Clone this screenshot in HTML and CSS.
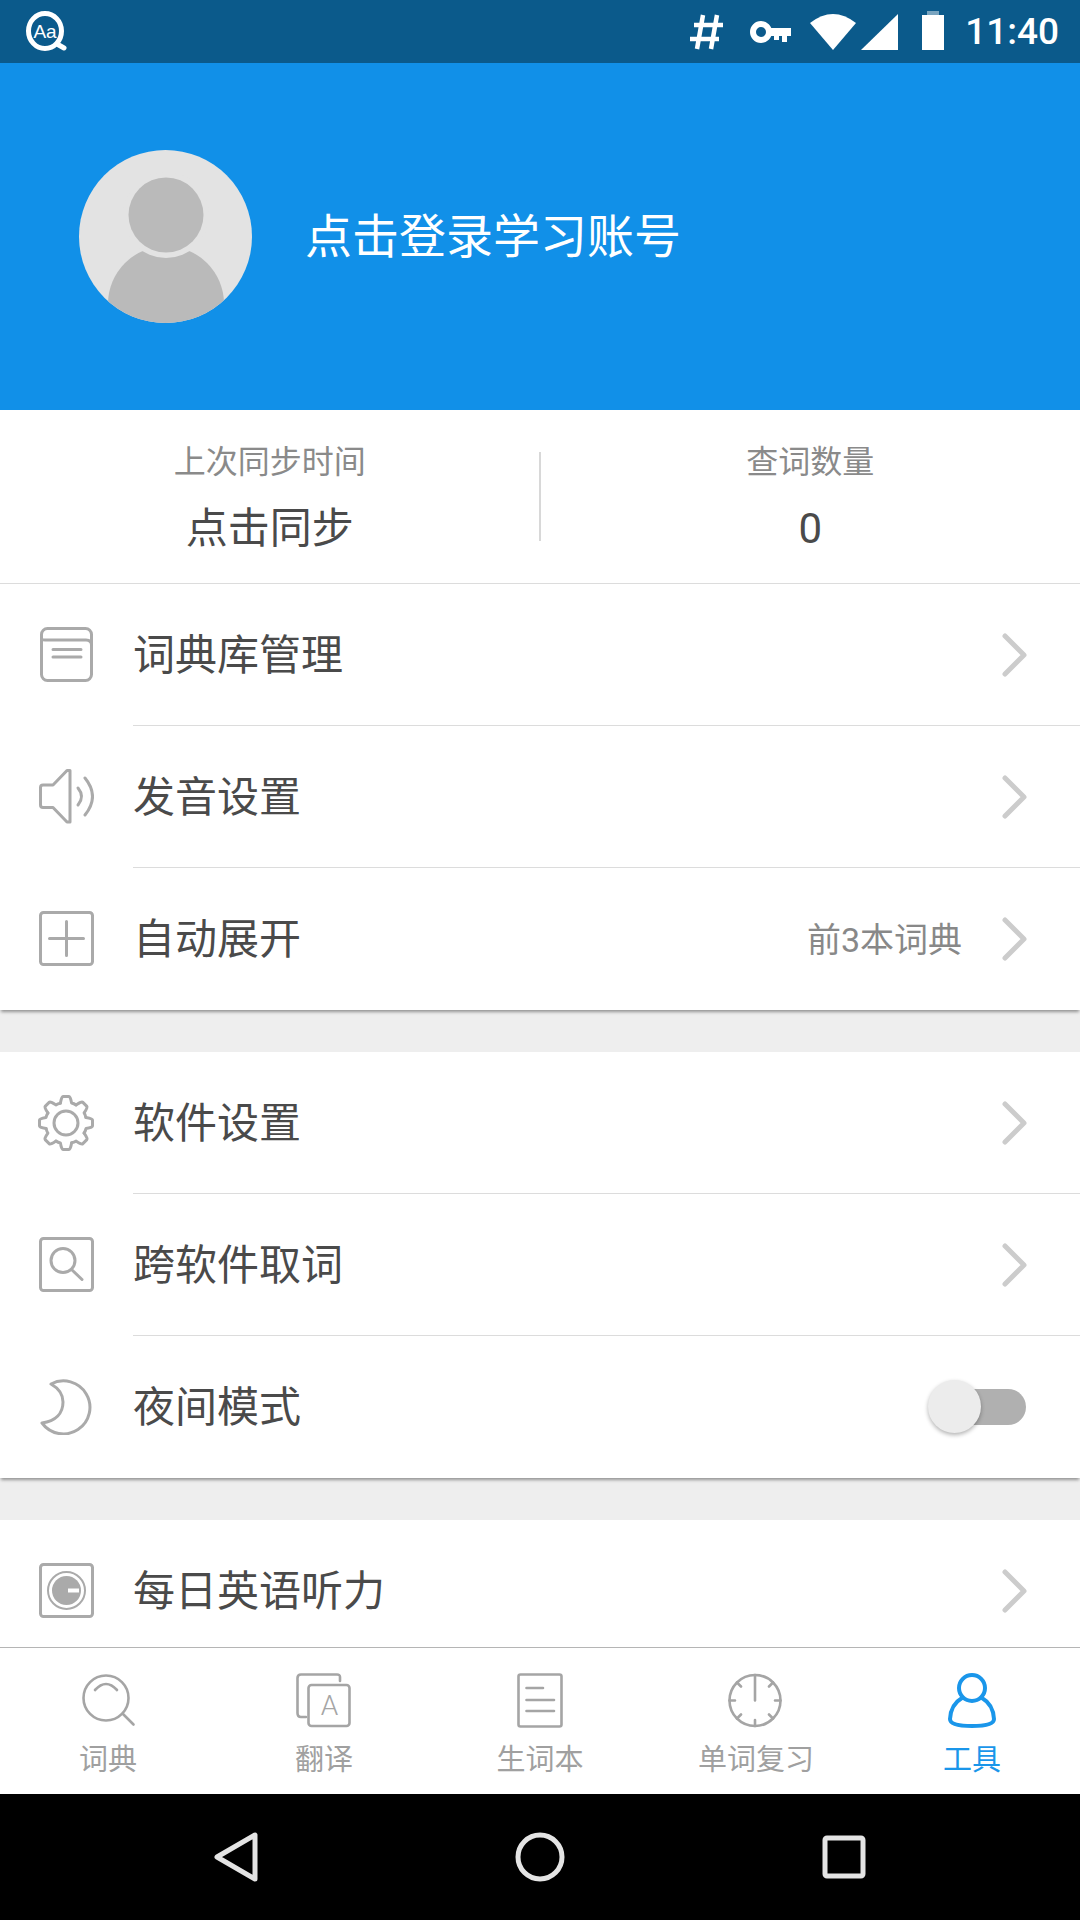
FILE: index.html
```html
<!DOCTYPE html>
<html lang="zh-CN">
<head>
<meta charset="utf-8">
<title>工具</title>
<link rel="stylesheet" href="styles.css">
</head>
<body>
<div class="phone">
  <header class="status">
    <svg class="s-logo" width="46" height="42" viewBox="0 0 46 42">
      <ellipse cx="21" cy="20" rx="16.5" ry="17.5" fill="none" stroke="#fff" stroke-width="5"/>
      <path d="M33 33 L40 37" stroke="#fff" stroke-width="5" stroke-linecap="round"/>
      <text x="21" y="27" class="s-logo-text" text-anchor="middle">Aa</text>
    </svg>
    <div class="status-right">
      <svg width="33" height="36" viewBox="0 0 33 36"><path d="M13 1 L7 35 M27 1 L21 35 M4 11 H33 M0 25 H29" stroke="#fff" stroke-width="4.5" fill="none"/></svg>
      <svg class="s-key" width="41" height="24" viewBox="0 0 41 24"><circle cx="11" cy="12" r="8" fill="none" stroke="#fff" stroke-width="6"/><path d="M18 8 H41 V16 H37 V22 H32 V16 H29 V20 H24 V16 H18 Z" fill="#fff"/></svg>
      <svg class="s-wifi" width="46" height="36" viewBox="0 0 46 36"><path d="M0 9 Q23 -9 46 9 L23 36 Z" fill="#fff"/></svg>
      <svg class="s-signal" width="37" height="36" viewBox="0 0 37 36"><path d="M37 0 V36 H0 Z" fill="#fff"/></svg>
      <svg class="s-batt" width="22" height="39" viewBox="0 0 22 39"><rect x="5" y="0" width="12" height="5" fill="#fff" opacity=".45"/><rect x="0" y="4" width="22" height="35" fill="#fff"/></svg>
      <span class="time">11:40</span>
    </div>
  </header>

  <section class="profile">
    <svg class="avatar" width="173" height="173" viewBox="0 0 173 173">
      <defs><clipPath id="av"><circle cx="86.5" cy="86.5" r="86.5"/></clipPath></defs>
      <g clip-path="url(#av)">
        <rect width="173" height="173" fill="#e3e3e3"/>
        <circle cx="87" cy="154" r="58" fill="#bababa"/>
        <circle cx="87" cy="65" r="43" fill="#e3e3e3"/>
        <circle cx="87" cy="65" r="37.5" fill="#bababa"/>
      </g>
    </svg>
    <div class="login">点击登录学习账号</div>
  </section>

  <main class="scroll">
    <section class="stats">
      <div class="stat"><div class="stat-label">上次同步时间</div><div class="stat-value">点击同步</div></div>
      <div class="stat-sep"></div>
      <div class="stat"><div class="stat-label">查词数量</div><div class="stat-value">0</div></div>
    </section>

    <section class="group">
      <div class="row">
        <svg class="ico" width="56" height="56" viewBox="0 0 56 56"><rect x="3.5" y="1.5" width="50" height="52" rx="6"/><path d="M3.5 12 Q3.5 13 7 13 H48 Q53.5 13 53.5 18"/><path d="M15 22.5 H43 M15 30 H43"/></svg>
        <div class="label">词典库管理</div>
        <svg class="chev" width="26" height="44" viewBox="0 0 26 44"><path d="M3 3 L22 22 L3 41"/></svg>
      </div>
      <div class="row">
        <svg class="ico" width="56" height="56" viewBox="0 0 56 56"><path d="M32 1.5 H29 L15 16 H5 Q2.5 16 2.5 18.5 V36 Q2.5 38.5 5 38.5 H15 L29 53 H32 Z"/><path d="M40 19 Q47 27.5 40 36"/><path d="M47 9 Q62 27.5 47 46"/></svg>
        <div class="label">发音设置</div>
        <svg class="chev" width="26" height="44" viewBox="0 0 26 44"><path d="M3 3 L22 22 L3 41"/></svg>
      </div>
      <div class="row">
        <svg class="ico" width="56" height="56" viewBox="0 0 56 56"><rect x="2.5" y="1.5" width="52" height="52" rx="3"/><path d="M11.5 27.5 H45.5 M28.5 10.5 V44.5"/></svg>
        <div class="label">自动展开</div>
        <div class="value">前3本词典</div>
        <svg class="chev" width="26" height="44" viewBox="0 0 26 44"><path d="M3 3 L22 22 L3 41"/></svg>
      </div>
    </section>

    <section class="group">
      <div class="row">
        <svg class="ico" width="56" height="56" viewBox="-28 -28 56 56">
          <defs><path id="tooth" d="M-5.6 -20 Q-4.5 -26.5 -3 -26.5 H3 Q4.5 -26.5 5.6 -20 Q8 -19.5 10 -18"/></defs>
          <use href="#tooth"/><use href="#tooth" transform="rotate(45)"/><use href="#tooth" transform="rotate(90)"/><use href="#tooth" transform="rotate(135)"/><use href="#tooth" transform="rotate(180)"/><use href="#tooth" transform="rotate(225)"/><use href="#tooth" transform="rotate(270)"/><use href="#tooth" transform="rotate(315)"/>
          <circle r="12"/>
        </svg>
        <div class="label">软件设置</div>
        <svg class="chev" width="26" height="44" viewBox="0 0 26 44"><path d="M3 3 L22 22 L3 41"/></svg>
      </div>
      <div class="row">
        <svg class="ico" width="56" height="56" viewBox="0 0 56 56"><rect x="2.5" y="1.5" width="52" height="52" rx="3"/><circle cx="25" cy="23.5" r="12"/><path d="M33.5 32.5 L44 42.5"/></svg>
        <div class="label">跨软件取词</div>
        <svg class="chev" width="26" height="44" viewBox="0 0 26 44"><path d="M3 3 L22 22 L3 41"/></svg>
      </div>
      <div class="row">
        <svg class="ico" width="56" height="56" viewBox="0 0 56 56"><path d="M13 5 A26.5 26.5 0 1 1 4 44 C18 42 25 34 25 23 C25 15 20 9 13 5 Z"/></svg>
        <div class="label">夜间模式</div>
        <div class="switch"><div class="knob"></div></div>
      </div>
    </section>

    <section class="group">
      <div class="row">
        <svg class="ico" width="56" height="56" viewBox="0 0 56 56"><rect x="2.5" y="1.5" width="52" height="52" rx="3"/><circle cx="28.5" cy="27.5" r="18.5" stroke-width="2"/><circle cx="28.5" cy="27.5" r="14.5" class="solid"/><path d="M30 27.5 H41" class="gap"/></svg>
        <div class="label">每日英语听力</div>
        <svg class="chev" width="26" height="44" viewBox="0 0 26 44"><path d="M3 3 L22 22 L3 41"/></svg>
      </div>
    </section>
  </main>

  <nav class="tabs">
    <div class="tab">
      <svg class="tico" width="56" height="56" viewBox="0 0 56 56"><circle cx="26" cy="25" r="22.5"/><path d="M15 17 Q26 5 37 17"/><path d="M43 41 L53.5 51.5"/></svg>
      <span>词典</span>
    </div>
    <div class="tab">
      <svg class="tico" width="56" height="56" viewBox="0 0 56 56"><path d="M44 8 V4 Q44 1.5 41 1.5 H5 Q1.5 1.5 1.5 5 V40 Q1.5 44 5 44 H10"/><rect x="12.5" y="12" width="41" height="41" rx="3"/><text x="33.6" y="42" class="tico-a" text-anchor="middle">A</text></svg>
      <span>翻译</span>
    </div>
    <div class="tab">
      <svg class="tico" width="56" height="56" viewBox="0 0 56 56"><rect x="6.5" y="1.5" width="43" height="52" rx="2"/><path d="M14.5 15 H31 M14.5 27 H42 M14.5 38 H42"/></svg>
      <span>生词本</span>
    </div>
    <div class="tab">
      <svg class="tico" width="56" height="56" viewBox="0 0 56 56"><circle cx="27" cy="27.5" r="25.5"/><path d="M27 2 V27.5 M52.5 27.5 H47 M27 53 V47 M1.5 27.5 H7 M45 9.5 L41 13.5 M45 45.5 L41 41.5 M9 45.5 L13 41.5 M9 9.5 L13 13.5"/></svg>
      <span>单词复习</span>
    </div>
    <div class="tab tab-on">
      <svg class="tico" width="56" height="56" viewBox="0 0 56 56"><circle cx="28" cy="15" r="13"/><path d="M18 25 C11 29 6.5 37 6 46 Q6 53 28 53 Q50 53 50 46 C49.5 37 45 29 38 25"/></svg>
      <span>工具</span>
    </div>
  </nav>

  <footer class="nav">
    <svg width="50" height="52" viewBox="0 0 50 52"><path d="M44 4 V48 L6 26 Z"/></svg>
    <svg width="50" height="52" viewBox="0 0 50 52"><circle cx="25" cy="26" r="22"/></svg>
    <svg width="50" height="52" viewBox="0 0 50 52"><rect x="6" y="7" width="38" height="38" rx="2"/></svg>
  </footer>
</div>
</body>
</html>
```

FILE: styles.css
```css
* { box-sizing: border-box; }
html, body { margin: 0; padding: 0; }
body {
  font-family: Roboto, "Noto Sans CJK SC", sans-serif;
  background: #fff;
}
svg { display: block; flex: none; }

.phone {
  width: 1080px;
  height: 1920px;
  display: flex;
  flex-direction: column;
  overflow: hidden;
}

/* status bar */
.status {
  flex: none;
  height: 63px;
  background: #0b5a8b;
  display: flex;
  align-items: center;
  padding: 0 21px 0 24px;
}
.s-logo-text {
  font-family: "Liberation Sans Narrow", "Liberation Sans", sans-serif;
  font-size: 19px;
  fill: #fff;
}
.status-right {
  margin-left: auto;
  display: flex;
  align-items: center;
}
.s-key { margin-left: 27px; }
.s-wifi { margin-left: 19px; }
.s-signal { margin-left: 5px; }
.s-batt { margin-left: 24px; margin-top: -3px; }
.time {
  margin-left: 21px;
  font-size: 37px;
  font-weight: 500;
  color: #fff;
  line-height: 63px;
}

/* profile */
.profile {
  flex: none;
  height: 347px;
  background: #1190e8;
  display: flex;
  align-items: center;
  gap: 53px;
  padding-left: 79px;
}
.login { font-size: 47px; color: #fff; padding-bottom: 8px; }

/* scrolling content */
.scroll {
  flex: 1;
  min-height: 0;
  overflow: hidden;
  background: #eeeeee;
}
.stats {
  height: 174px;
  background: #fff;
  border-bottom: 1px solid #dcdcdc;
  display: grid;
  grid-template-columns: 1fr 1px 1fr;
}
.stat {
  display: flex;
  flex-direction: column;
  align-items: center;
  padding-top: 29px;
}
.stat-label { font-size: 32px; line-height: 46px; color: #8a8a8a; }
.stat-value { font-size: 42px; line-height: 60px; margin-top: 14px; color: #4a4a4a; }
.stat-sep { align-self: center; height: 89px; background: #d8d8d8; margin-left: -1px; }

.group {
  background: #fff;
  margin-bottom: 42px;
  box-shadow: 0 3px 3px -1px rgba(0, 0, 0, .38);
}
.group:last-child { box-shadow: none; }
.row {
  height: 142px;
  display: flex;
  align-items: center;
  padding: 0 52px 0 38px;
  position: relative;
}
.row + .row::before {
  content: "";
  position: absolute;
  left: 133px;
  right: 0;
  top: -1px;
  height: 1px;
  background: #dcdcdc;
}
.ico { fill: none; stroke: #aaa; stroke-width: 3; stroke-linecap: round; stroke-linejoin: round; }
.ico .solid { fill: #aaa; stroke: none; }
.ico .gap { stroke: #fff; stroke-width: 4; stroke-linecap: butt; }
.label {
  margin-left: 39px;
  padding-bottom: 7px;
  font-size: 42px;
  color: #4a4a4a;
  flex: 1;
}
.value { font-size: 34px; color: #888; margin-right: 40px; padding-bottom: 3px; }
.chev { fill: none; stroke: #ccc; stroke-width: 5; stroke-linecap: round; stroke-linejoin: round; }

.switch {
  width: 90px;
  height: 36px;
  border-radius: 18px;
  background: #b0b0b0;
  position: relative;
  margin-right: 2px;
}
.knob {
  position: absolute;
  left: -8px;
  top: -9px;
  width: 53px;
  height: 53px;
  border-radius: 50%;
  background: #ececec;
  box-shadow: 0 2px 4px rgba(0, 0, 0, .3);
}

/* bottom tabs */
.tabs {
  flex: none;
  height: 147px;
  background: #fff;
  border-top: 1px solid #b5b5b5;
  display: grid;
  grid-template-columns: repeat(5, 1fr);
  position: relative;
}
.tab {
  display: flex;
  flex-direction: column;
  align-items: center;
  padding-top: 25px;
  color: #a0a0a0;
  font-size: 29px;
  line-height: 40px;
}
.tab span { margin-top: 11px; }
.tico { fill: none; stroke: #a5a5a5; stroke-width: 2.6; stroke-linecap: round; stroke-linejoin: round; }
.tico-a {
  font-family: Roboto, sans-serif;
  font-size: 28px;
  font-weight: 300;
  fill: #a5a5a5;
  stroke: none;
}
.tab-on { color: #1a96ea; }
.tab-on .tico { stroke: #1a96ea; stroke-width: 4; }

/* navigation bar */
.nav {
  flex: none;
  height: 126px;
  background: #000;
  display: flex;
  align-items: center;
  justify-content: space-between;
  padding: 0 211px;
}
.nav svg { fill: none; stroke: #e4e4e4; stroke-width: 5; stroke-linejoin: round; }
```
